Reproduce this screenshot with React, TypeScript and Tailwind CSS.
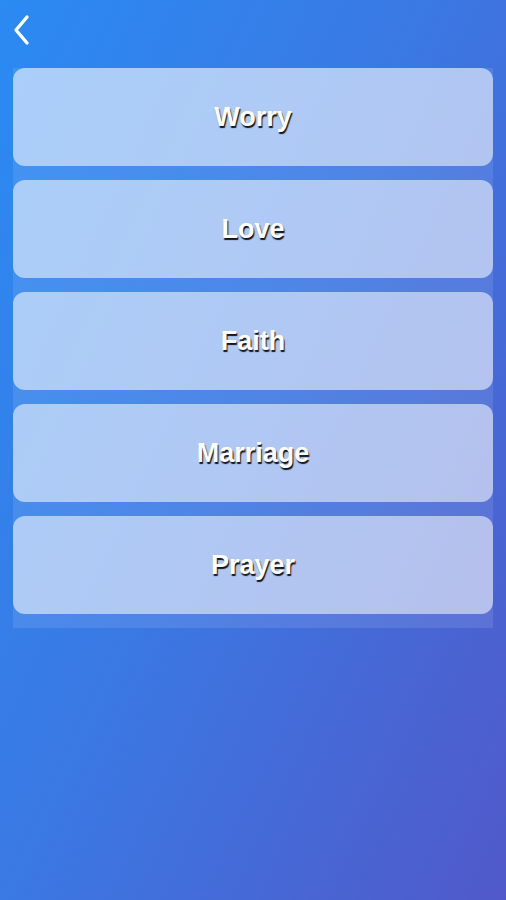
const topics = ['Worry', 'Love', 'Faith', 'Marriage', 'Prayer']

const App = () => {
    return (
        <div className="min-h-[900px] w-full bg-[linear-gradient(115deg,#2b8af3_0%,#3a79e4_45%,#5159c9_100%)] font-['Liberation_Sans',Arial,sans-serif]">
            <header className="h-[68px] px-[12px] pt-[14px]">
                <button className="block">
                    <svg width="20" height="32" viewBox="0 0 20 32" fill="none">
                        <path d="M15 3 L4 16 L15 29" stroke="white" strokeWidth="3.4" strokeLinecap="round" strokeLinejoin="round" />
                    </svg>
                </button>
            </header>

            <div className="mx-[13px] flex flex-col gap-[14px] bg-white/10 pb-[14px]">
                {topics.map((t) => (
                    <button
                        key={t}
                        className="h-[98px] w-full rounded-[12px] bg-white/55 text-[27px] font-bold text-white [text-shadow:1px_2px_1px_rgba(0,0,0,0.9)]"
                    >
                        {t}
                    </button>
                ))}
            </div>
        </div>
    )
}

export default App
